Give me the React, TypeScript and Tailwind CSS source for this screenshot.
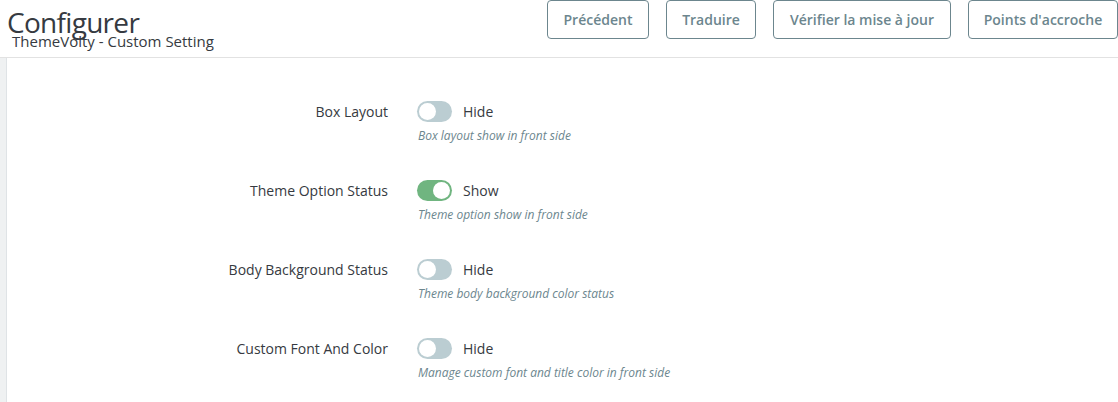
import React from "react";

const rows = [
  { label: "Box Layout", on: false, help: "Box layout show in front side" },
  { label: "Theme Option Status", on: true, help: "Theme option show in front side" },
  { label: "Body Background Status", on: false, help: "Theme body background color status" },
  { label: "Custom Font And Color", on: false, help: "Manage custom font and title color in front side" },
];

function Toggle({ on }: { on: boolean }) {
  return (
    <div
      className={
        on
          ? "relative w-[35px] h-[21px] rounded-full bg-[#70b580] flex items-center justify-end pr-[2px]"
          : "relative w-[35px] h-[21px] rounded-full bg-[#bbcdd2] flex items-center justify-start pl-[2px]"
      }
    >
      <div className="w-[17px] h-[17px] rounded-full bg-white" />
    </div>
  );
}

export default function App() {
  const btn =
    "h-[39px] border border-[#6c868e] rounded-[4px] text-[#6c868e] text-[14px] font-semibold flex items-center justify-center bg-white";
  return (
    <div
      className="w-[1118px] h-[402px] bg-white overflow-hidden text-[#363a41]"
      style={{ fontFamily: '"Open Sans", sans-serif' }}
    >
      <div className="h-[58px] border-b border-[#e2e2e2] flex justify-between">
        <div className="pt-[7px]">
          <div className="text-[28px] leading-[30px] pl-[7px] tracking-[-0.7px]">Configurer</div>
          <div className="text-[15px] leading-[16px] pl-[12px] -mt-[4px]">ThemeVolty - Custom Setting</div>
        </div>
        <div className="flex gap-[17px] items-start">
          <button className={btn + " w-[102px]"}>Précédent</button>
          <button className={btn + " w-[90px]"}>Traduire</button>
          <button className={btn + " w-[178px]"}>Vérifier la mise à jour</button>
          <button className={btn + " w-[150px]"}>Points d'accroche</button>
        </div>
      </div>
      <div className="flex h-[344px]">
        <div className="w-[7px] bg-[#eff1f2] border-r border-[#dfe3e6]" />
        <div className="flex-1 pt-[43px]">
          {rows.map((r) => (
            <div key={r.label} className="flex h-[79px]">
              <div className="w-[381px] text-right text-[14px] leading-[21px]">{r.label}</div>
              <div className="ml-[29px]">
                <div className="flex items-center h-[21px]">
                  <Toggle on={r.on} />
                  <span className="ml-[11px] text-[14px] leading-[21px]">{r.on ? "Show" : "Hide"}</span>
                </div>
                <div className="mt-[5px] text-[12px] leading-[17px] italic text-[#6c868e] pl-[1px]">{r.help}</div>
              </div>
            </div>
          ))}
        </div>
      </div>
    </div>
  );
}
